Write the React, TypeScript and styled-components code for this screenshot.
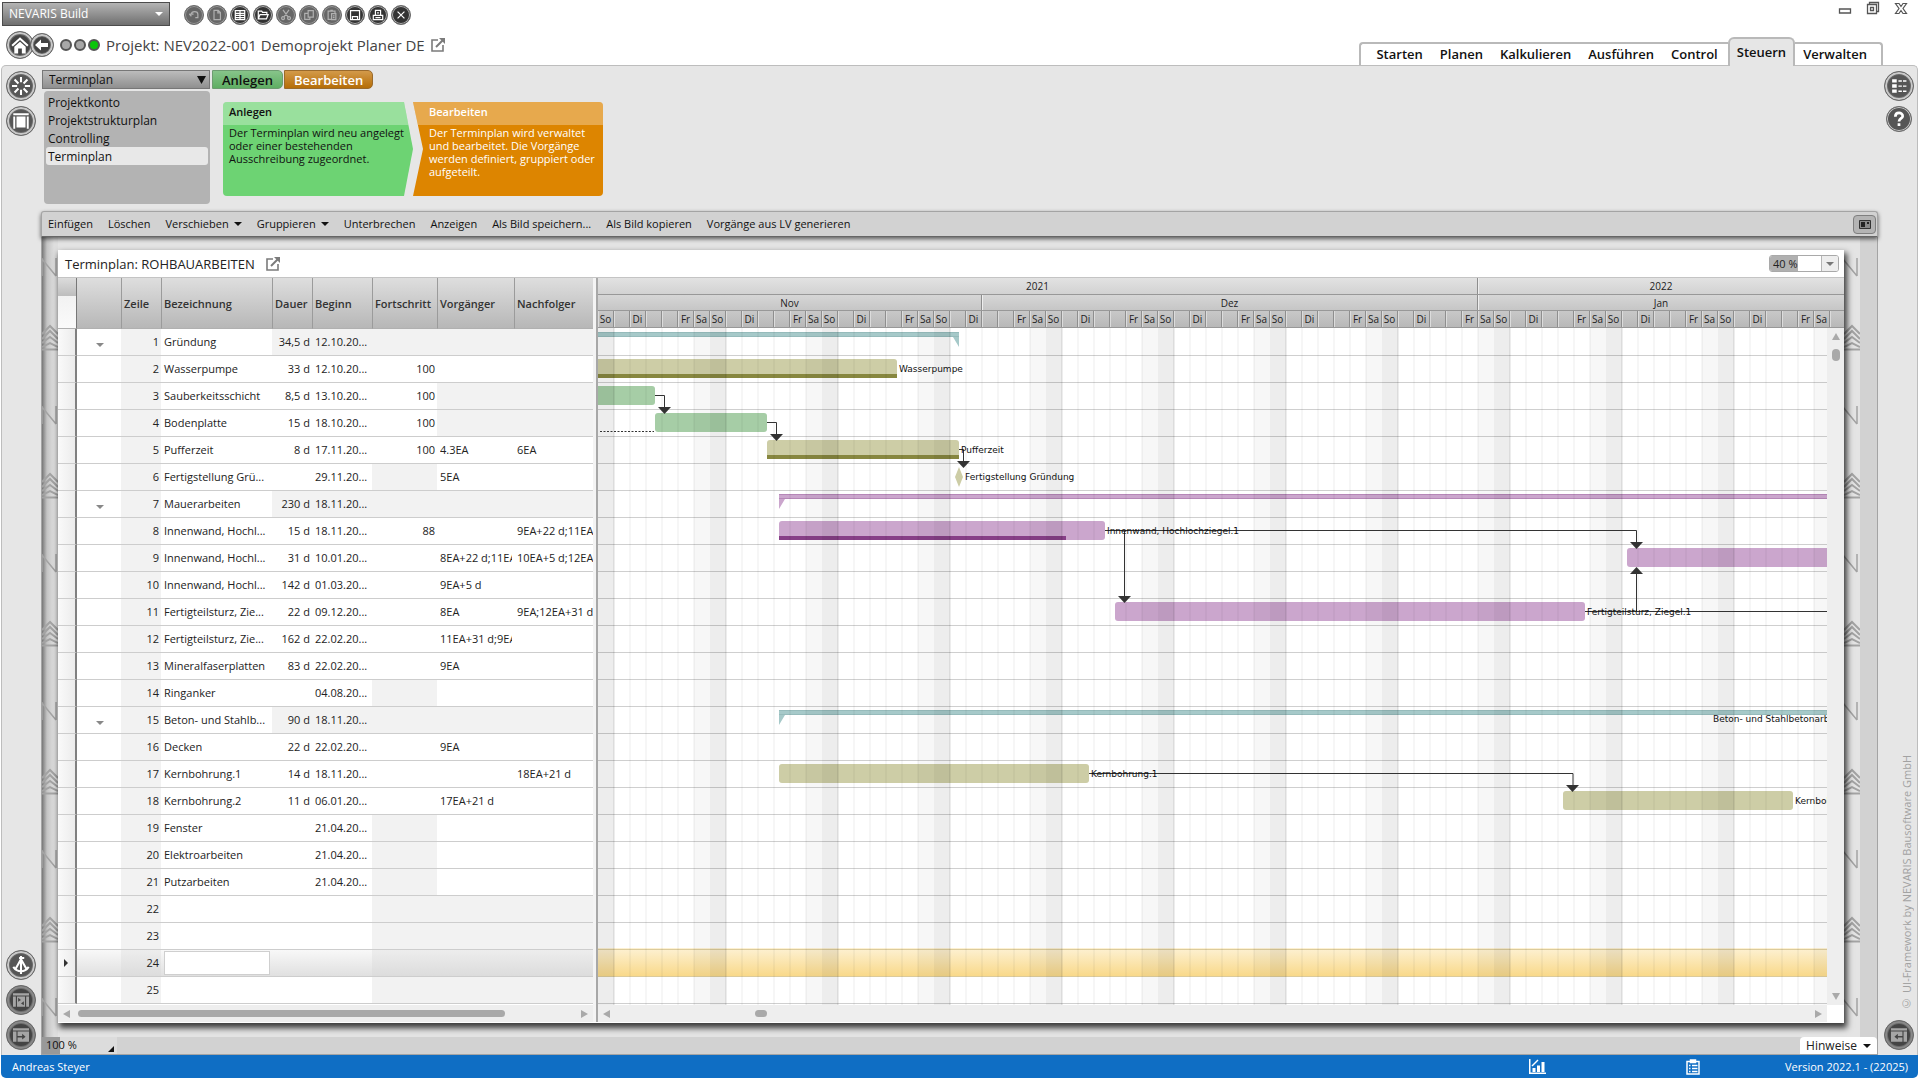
import React from "react";
import styled, { createGlobalStyle, css } from "styled-components";

const Global = createGlobalStyle`
  *, *::before, *::after { box-sizing: border-box; }
  body { margin: 0; background: #fff; color: #222; font: 12px/16px "Open Sans", "Noto Sans", sans-serif; }
  button, input, select { font: inherit; color: inherit; margin: 0; padding: 0; border: 0; background: none; border-radius: 0; outline: 0; }
  a { color: inherit; text-decoration: none; }
  svg { display: block; }
`;

/* ---------- shared parts ---------- */

const Round = styled.button<{ $size: number; $tone?: string; $ring?: string; $ink?: string; $tuck?: boolean }>`
  width: ${(p) => p.$size}px;
  height: ${(p) => p.$size}px;
  flex: none;
  display: grid;
  place-items: center;
  border-radius: 50%;
  color: ${(p) => p.$ink ?? "#fff"};
  background: ${(p) => p.$tone ?? "#565656"};
  border: 1px solid #6b6b6b;
  box-shadow: inset 0 0 0 2px ${(p) => p.$ring ?? "#c9c9c9"}, inset 0 0 0 3px #6b6b6b;
  ${(p) => p.$tuck && "margin-left: -4px;"}
`;

const SmallRound = styled(Round)`
  box-shadow: inset 0 0 0 1px ${(p) => p.$ring ?? "#c9c9c9"};
`;

const Select = styled.select`
  appearance: none;
  cursor: default;
`;

const Caret = styled.i<{ $w?: number; $color?: string }>`
  display: block;
  flex: none;
  border: solid transparent;
  border-width: ${(p) => p.$w ?? 4}px ${(p) => p.$w ?? 4}px 0;
  border-top-color: ${(p) => p.$color ?? "#111"};
`;

const Glyph = ({ d, size = 14, fill = false, w = 1.4 }: { d: string; size?: number; fill?: boolean; w?: number }) => (
  <svg width={size} height={size} viewBox="0 0 14 14" fill={fill ? "currentColor" : "none"} stroke={fill ? "none" : "currentColor"} strokeWidth={w} fillRule="evenodd">
    <path d={d} />
  </svg>
);

const OpenIcon = () => (
  <svg width="16" height="16" viewBox="0 0 16 16" fill="none" stroke="#7b7b7b" strokeWidth="1.6">
    <path d="M8 3H2v11h11V8" />
    <path d="M6 10l6.5-6.5" strokeWidth="2" />
    <path d="M9 1h6v6z" fill="#7b7b7b" stroke="none" />
  </svg>
);

/* ---------- page frame ---------- */

const Page = styled.div`
  min-height: 100vh;
  display: flex;
  flex-direction: column;
  padding: 0 2px 3px 1px;
`;

const Top = styled.header`
  display: flex;
  justify-content: space-between;
  height: 65px;
`;

const TopLeft = styled.div`
  display: flex;
  flex-direction: column;
  gap: 5px;
  padding: 1px 0 0 1px;
`;

const ToolRow = styled.div`
  display: flex;
  align-items: center;
  gap: 14px;
  height: 25px;
`;

const AppPick = styled.label`
  display: flex;
  align-items: center;
  width: 168px;
  height: 24px;
  padding: 0 6px;
  border: 1px solid #4c4c4c;
  background: linear-gradient(#b4b4b4, #6f6f6f);
  color: #fff;
  text-shadow: 1px 1px 1px #444;
  select { flex: 1; }
`;

const IconStrip = styled.div`
  display: flex;
  gap: 3px;
  padding-top: 3px;
`;

const TitleRow = styled.div`
  display: flex;
  align-items: center;
  height: 28px;
  padding-left: 4px;
`;

const Leds = styled.div`
  display: flex;
  gap: 2px;
  padding: 0 6px 0 6px;
`;

const Led = styled.span<{ $on?: boolean }>`
  width: 12px;
  height: 12px;
  border-radius: 50%;
  border: 2px solid #555;
  background: ${(p) => (p.$on ? "#0bc40b" : "#a8a8a8")};
`;

const Title = styled.h1`
  margin: 0 5px 0 0;
  font-size: 15px;
  line-height: 20px;
  font-weight: 400;
  color: #444;
`;

const TopRight = styled.div`
  display: flex;
  flex-direction: column;
  justify-content: space-between;
  align-items: flex-end;
`;

const WinButtons = styled.div`
  display: flex;
  gap: 14px;
  padding: 1px 10px 0 0;
  button { width: 14px; height: 14px; color: #555; }
`;

const Tabs = styled.nav`
  display: flex;
  align-items: flex-end;
  margin-right: 35px;
`;

const TabGroup = styled.div<{ $side: "left" | "right" }>`
  display: flex;
  gap: 17px;
  height: 23px;
  align-items: center;
  border: 2px solid #b9b9b9;
  border-bottom: 0;
  padding: 0 ${(p) => (p.$side === "left" ? "10px 2px 15px" : "14px 2px 8px")};
  ${(p) => (p.$side === "left" ? "border-right: 0; border-top-left-radius: 4px;" : "border-left: 0; border-top-right-radius: 4px;")}
`;

const Tab = styled.a<{ $active?: boolean }>`
  font-size: 13px;
  line-height: 18px;
  font-weight: 600;
  color: #111;
  ${(p) =>
    p.$active &&
    css`
      height: 29px;
      padding: 4px 7px 0;
      margin-bottom: -1px;
      background: #e6e6e6;
      border: 2px solid #b9b9b9;
      border-bottom: 0;
      border-radius: 6px 6px 0 0;
      z-index: 1;
    `}
`;

const Frame = styled.div`
  flex: 1;
  display: grid;
  grid-template-columns: 39px minmax(0, 1fr) 39px;
  background: #e6e6e6;
  border: 1px solid #bdbdbd;
  border-bottom: 0;
  border-radius: 5px 5px 0 0;
`;

const Rail = styled.aside<{ $side: "left" | "right" }>`
  display: flex;
  flex-direction: column;
  justify-content: space-between;
  align-items: center;
  padding: ${(p) => (p.$side === "left" ? "5px 2px 5px 0" : "5px 0 5px 2px")};
`;

const RailGroup = styled.div`
  display: flex;
  flex-direction: column;
  align-items: center;
  gap: 5px;
`;

const Credit = styled.span`
  writing-mode: vertical-rl;
  transform: rotate(180deg);
  color: #a2a2a2;
  font-size: 11px;
  line-height: 16px;
  margin: 0 0 4px 16px;
`;

const Center = styled.div`
  display: flex;
  flex-direction: column;
`;

/* ---------- module header ---------- */

const ModuleHead = styled.div`
  display: flex;
  height: 145px;
  padding-top: 4px;
`;

const ModuleCol = styled.div`
  width: 168px;
  margin: 0 2px 0 1px;
`;

const ModulePick = styled.label`
  display: flex;
  align-items: center;
  height: 19px;
  padding: 0 3px 0 6px;
  border: 1px solid #777;
  background: linear-gradient(#bcbcbc, #8f8f8f);
  color: #111;
  select { flex: 1; }
`;

const ModuleList = styled.ul`
  list-style: none;
  margin: 2px 0 0 2px;
  padding: 2px;
  height: 113px;
  border-radius: 4px;
  background: #b3b3b3;
`;

const ModuleItem = styled.button<{ $active?: boolean }>`
  display: block;
  width: 100%;
  height: 18px;
  padding: 0 2px;
  text-align: left;
  line-height: 17px;
  border-radius: 3px;
  color: #111;
  background: ${(p) => (p.$active ? "#e8e8e8" : "transparent")};
`;

const StepTabs = styled.div`
  display: flex;
  gap: 1px;
`;

const StepTab = styled.button<{ $kind: "go" | "edit" }>`
  height: 19px;
  padding: 0 9px;
  border: 1px solid ${(p) => (p.$kind === "go" ? "#6d9c70" : "#9a6a2c")};
  border-radius: 0 5px 5px 0;
  background: ${(p) => (p.$kind === "go" ? "linear-gradient(#87c48a, #5fae63)" : "linear-gradient(#d39a4a, #b56d07)")};
  color: ${(p) => (p.$kind === "go" ? "#111" : "#fff")};
  font-size: 13px;
  line-height: 16px;
  font-weight: 600;
`;

const Steps = styled.div`
  display: flex;
  padding: 13px 0 0 11px;
`;

const Step = styled.section<{ $kind: "go" | "edit" }>`
  width: 190px;
  height: 94px;
  overflow: hidden;
  font-size: 11px;
  line-height: 13px;
  font-weight: 500;
  color: ${(p) => (p.$kind === "go" ? "#111" : "#fff")};
  background: ${(p) => (p.$kind === "go" ? "#6dd373" : "#dd8500")};
  border-radius: ${(p) => (p.$kind === "go" ? "4px 0 0 4px" : "0 4px 4px 0")};
  clip-path: ${(p) =>
    p.$kind === "go"
      ? "polygon(0 0, 181px 0, 190px 50%, 181px 100%, 0 100%)"
      : "polygon(0 0, 100% 0, 100% 100%, 0 100%, 10px 50%)"};
  h2 {
    margin: 0;
    height: 23px;
    padding: 3px 6px 0 ${(p) => (p.$kind === "go" ? 6 : 16)}px;
    font-size: 11px;
    font-weight: 600;
    background: rgba(255, 255, 255, 0.3);
  }
  p { margin: 0; padding: 1px 0 0 ${(p) => (p.$kind === "go" ? 6 : 16)}px; white-space: nowrap; }
`;

/* ---------- workspace ---------- */

const Toolbar = styled.div`
  display: flex;
  align-items: center;
  gap: 15px;
  height: 26px;
  padding: 0 1px 0 6px;
  border: 1px solid #a4a4a4;
  border-bottom-color: #666;
  border-radius: 3px 3px 0 0;
  background: #d2d2d2;
  box-shadow: 0 2px 4px rgba(0, 0, 0, 0.6);
  z-index: 1;
  color: #111;
  font-size: 11px;
  > :last-child { margin-left: auto; }
`;

const ToolButton = styled.button`
  display: flex;
  align-items: center;
  gap: 5px;
  white-space: nowrap;
`;

const PanelToggle = styled.button`
  width: 23px;
  height: 19px;
  display: grid;
  place-items: center;
  border: 1px solid #7f7f7f;
  border-radius: 4px;
  background: #b4b4b4;
`;

const Workspace = styled.div`
  display: grid;
  grid-template-columns: 16px minmax(0, 1fr) 16px 17px;
  border: solid #a4a4a4;
  border-width: 0 1px;
  background: #e4e4e4;
`;

const Side = styled.div<{ $dark?: boolean }>`
  overflow: hidden;
  background: ${(p) => (p.$dark ? "linear-gradient(90deg, #777, #c4c4c4 5px, #dedede 12px)" : "#e4e4e4")};
`;

const Gutter = styled.div`
  background: #d2d2d2;
`;

const Panel = styled.main`
  margin: 13px 0 14px;
  background: #fff;
  box-shadow: 2px 4px 6px 1px rgba(0, 0, 0, 0.75);
  z-index: 1;
`;

const PanelHead = styled.div`
  display: flex;
  align-items: center;
  justify-content: space-between;
  height: 28px;
  padding: 0 5px 0 7px;
  border-bottom: 1px solid #c4c4c4;
  h2 { margin: 0; display: flex; gap: 10px; font-size: 13px; line-height: 16px; font-weight: 400; }
`;

const Percent = styled.div`
  display: flex;
  width: 70px;
  height: 17px;
  border: 1px solid #a9a9a9;
  border-radius: 3px;
  overflow: hidden;
  input {
    flex: 1;
    min-width: 0;
    padding-left: 3px;
    font-size: 11px;
    background: linear-gradient(90deg, #b0b0b0 28px, #fff 28px);
  }
  button {
    width: 17px;
    display: grid;
    place-items: center;
    border-left: 1px solid #b5b5b5;
    background: #ededed;
  }
`;

const Split = styled.div`
  display: grid;
  grid-template-columns: 535px 5px minmax(0, 1fr);
`;

const Splitter = styled.div`
  background: #f4f4f4;
  border-right: 2px solid #a8a8a8;
`;

/* ---------- task table ---------- */

const TableBox = styled.div`
  height: 727px;
  overflow: hidden;
`;

const Table = styled.table`
  width: 100%;
  table-layout: fixed;
  border-collapse: separate;
  border-spacing: 0;
  font-size: 11px;
  line-height: 16px;
`;

const HeadCell = styled.th`
  height: 51px;
  padding: 2px 0 0 2px;
  text-align: left;
  font-weight: 600;
  color: #333;
  white-space: nowrap;
  border-left: 1px solid #9b9b9b;
  border-bottom: 1px solid #b0b0b0;
  background: linear-gradient(#dedede, #b7b7b7);
  &:first-child { border-left: 0; background: linear-gradient(#dcdcdc, #bdbdbd 18px, #f2f2f2 18px, #fafafa); border-right: 1px solid #777; }
  &:nth-child(2) { border-left: 0; }
`;

const Cell = styled.td<{ $right?: boolean; $grey?: boolean; $current?: boolean }>`
  height: 27px;
  padding: 0 2px 0 3px;
  overflow: hidden;
  white-space: nowrap;
  text-align: ${(p) => (p.$right ? "right" : "left")};
  border-bottom: 1px solid #cdcdcd;
  background: ${(p) =>
    p.$current
      ? p.$grey ? "linear-gradient(#ededed, #dcdcdc)" : "linear-gradient(#f8f8f8, #e0e0e0)"
      : p.$grey ? "#f2f2f2" : "#fff"};
`;

const Clip = styled.div`
  overflow: hidden;
`;

const RowHead = styled.td`
  height: 27px;
  padding: 0 0 0 6px;
  border-right: 2px solid #808080;
  border-bottom: 1px solid #cdcdcd;
  background: linear-gradient(90deg, #fafafa, #ececec);
`;

const Expander = styled.button`
  display: grid;
  place-items: center;
  width: 100%;
  padding-top: 5px;
`;

const RowMark = styled.i`
  display: block;
  width: 0;
  border: solid transparent;
  border-width: 4px 0 4px 4px;
  border-left-color: #333;
`;

const NameInput = styled.input`
  display: block;
  width: 106px;
  height: 24px;
  background: #fff;
  border: 1px solid #cfcfcf;
`;

/* ---------- scroll bars ---------- */

const HBar = styled.div`
  display: flex;
  align-items: center;
  justify-content: space-between;
  height: 17px;
  padding: 0 5px;
  background: #eee;
`;

const VBar = styled.div`
  display: flex;
  flex-direction: column;
  align-items: center;
  justify-content: space-between;
  padding: 5px 0 5px;
  background: #eee;
`;

const Track = styled.div<{ $v?: boolean }>`
  flex: 1;
  display: flex;
  padding: ${(p) => (p.$v ? "8px 0" : "0 4px")};
`;

const Thumb = styled.div<{ $w: number; $h: number; $at?: number }>`
  width: ${(p) => p.$w}px;
  height: ${(p) => p.$h}px;
  margin-left: ${(p) => p.$at ?? 0}px;
  border-radius: 4px;
  background: #a9a9a9;
`;

const Arrow = ({ dir }: { dir: "l" | "r" | "u" | "d" }) => (
  <svg width="8" height="8" viewBox="0 0 8 8" fill="#a9a9a9">
    <path d={{ l: "M7 0v8L0 4z", r: "M1 0v8l7-4z", u: "M0 7h8L4 0z", d: "M0 1h8L4 8z" }[dir]} />
  </svg>
);

/* ---------- Gantt ---------- */

const ScaleRow = styled.div<{ $level: number }>`
  display: flex;
  height: ${(p) => (p.$level === 1 ? 16 : 17)}px;
  overflow: hidden;
  font-size: 10px;
  line-height: 16px;
  color: #222;
  border-bottom: 1px solid #989898;
  background: ${(p) => ["linear-gradient(#e2e2e2, #d2d2d2)", "linear-gradient(#d6d6d6, #c6c6c6)", "linear-gradient(#c8c8c8, #b8b8b8)"][p.$level]};
`;

const Span = styled.div<{ $days?: number }>`
  flex: ${(p) => (p.$days ? `0 0 ${p.$days * 16}px` : "1 1 0")};
  text-align: center;
  &:not(:last-child) { border-right: 1px solid #8e8e8e; }
  & + & { box-shadow: inset 1px 0 #eee; }
`;

const Day = styled.div`
  flex: 0 0 16px;
  text-align: center;
  line-height: 17px;
  border-right: 1px solid #8e8e8e;
  box-shadow: inset 1px 0 #dcdcdc;
`;

const GanttBody = styled.div`
  display: grid;
  grid-template-columns: minmax(0, 1fr) 17px;
  height: 677px;
  > svg { width: 100%; height: 100%; }
`;

const GanttFoot = styled.div`
  display: grid;
  grid-template-columns: minmax(0, 1fr) 17px;
`;

const DAY_NAMES = ["So", "", "Di", "", "", "Fr", "Sa"];
const DAYS = Array.from({ length: 78 }, (_, i) => (i === 77 ? "" : DAY_NAMES[i % 7]));

const COLORS = { olive: ["#cdcda6", "#87873f"], green: ["#a6cda6", "#4f8f4f"], violet: ["#cba6cd", "#873f87"], teal: ["#a6c9c9", "#6f9d9d"] } as const;
type Hue = keyof typeof COLORS;

type Bar = { row: number; from: number; to: number; hue: Hue; done?: number; label?: string };
const BARS: Bar[] = [
  { row: 2, from: -10, to: 299, hue: "olive", done: 299, label: "Wasserpumpe" },
  { row: 3, from: -10, to: 57, hue: "green" },
  { row: 4, from: 57, to: 169, hue: "green" },
  { row: 5, from: 169, to: 361, hue: "olive", done: 361, label: "Pufferzeit" },
  { row: 8, from: 181, to: 507, hue: "violet", done: 468, label: "Innenwand, Hochlochziegel.1" },
  { row: 9, from: 1029, to: 1900, hue: "violet" },
  { row: 11, from: 517, to: 987, hue: "violet", label: "Fertigteilsturz, Ziegel.1" },
  { row: 17, from: 181, to: 491, hue: "olive", label: "Kernbohrung.1" },
  { row: 18, from: 965, to: 1195, hue: "olive", label: "Kernbohrung.2" },
];

const rowY = (row: number) => (row - 1) * 27;

const TaskBar = ({ row, from, to, hue, done }: Bar) => {
  const y = rowY(row) + 4;
  return (
    <g>
      <rect x={from} y={y} width={to - from} height={19} rx={3} fill={COLORS[hue][0]} />
      {done !== undefined && <rect x={from} y={y + 15} width={done - from} height={4} fill={COLORS[hue][1]} />}
    </g>
  );
};

const Summary = ({ row, from, to, hue }: Bar) => {
  const y = rowY(row) + 4;
  return (
    <g fill={COLORS[hue][0]}>
      <rect x={from} y={y} width={to - from} height={5} />
      <path d={`M${from} ${y}v15l6 -10v-5z M${to} ${y}v15l-6 -10v-5z`} />
      <path d={`M${from} ${y + 0.5}H${to} M${from} ${y + 4.5}H${to}`} stroke={COLORS[hue][1]} strokeOpacity="0.3" />
    </g>
  );
};

const Down = ({ x, y }: { x: number; y: number }) => <path d={`M${x - 6} ${y}h13l-6.5 7z`} fill="#333" />;

const Chart = () => (
  <svg fontSize="9" fontFamily='"DejaVu Sans", sans-serif' fill="#111" role="img" aria-label="Balkenplan">
    <defs>
      <pattern id="week" width="112" height="27" patternUnits="userSpaceOnUse">
        <rect width="16" height="27" fill="#000" fillOpacity="0.07" />
        <rect x="96" width="16" height="27" fill="#000" fillOpacity="0.03" />
        <rect x="15" width="2" height="27" fill="#000" fillOpacity="0.07" />
        {[32, 48, 64, 80, 96].map((x) => (
          <rect key={x} x={x - 1} width="2" height="27" fill="#000" fillOpacity="0.035" />
        ))}
      </pattern>
      <pattern id="rows" width="100" height="27" patternUnits="userSpaceOnUse">
        <rect width="100" height="1" fill="#cfcfcf" />
      </pattern>
      <linearGradient id="today" x2="0" y2="1">
        <stop offset="0" stopColor="#fdf1d3" />
        <stop offset="1" stopColor="#f9d98a" />
      </linearGradient>
    </defs>
    <rect width="100%" height="100%" fill="#fff" />
    <rect y="1" width="100%" height="676" fill="url(#rows)" />
    <rect y="620" width="100%" height="28" fill="url(#today)" />
    <path d="M0 621.5h3000M0 648.5h3000" stroke="#dccb9b" />
    <Summary row={1} from={-20} to={361} hue="teal" />
    <Summary row={7} from={181} to={2500} hue="violet" />
    <Summary row={15} from={181} to={2500} hue="teal" />
    {BARS.map((b) => <TaskBar key={b.row} {...b} />)}
    <path d="M361 139l4 10-4 10-4-10z" fill="#cdcda6" />
    <rect width="100%" height="100%" fill="url(#week)" />
    <g fill="none" stroke="#333">
      <path d="M2 103.5h54" strokeDasharray="2 1.5" />
      <path d="M57 67.5h9.500v12 M169 94.500h9.500v12 M361 121.500h4.500v12" />
      <path d="M507 202.500h531.500v12 M526.500 202.500v66 M1038.500 283.500v-38 M987 283.500h2000 M491 445.500h484v12" />
    </g>
    <Down x={66} y={79} />
    <Down x={178} y={106} />
    <Down x={365} y={133} />
    <Down x={526} y={268} />
    <Down x={1038} y={214} />
    <Down x={974} y={457} />
    <path d="M1032 246h13l-6.500 -7z" fill="#333" />
    {BARS.filter((b) => b.label).map((b) => (
      <text key={b.row} x={b.to + 2} y={rowY(b.row) + 17}>{b.label}</text>
    ))}
    <text x="367" y={rowY(6) + 17}>Fertigstellung Gründung</text>
    <text x="1115" y={rowY(15) + 16}>Beton- und Stahlbetonarbeiten</text>
  </svg>
);

/* ---------- status ---------- */

const BottomBar = styled.div`
  display: flex;
  justify-content: space-between;
  height: 18px;
  background: #d2d2d2;
  border: 1px solid #a4a4a4;
  border-width: 0 1px 1px;
`;

const ZoomField = styled.label`
  display: flex;
  align-items: flex-end;
  width: 75px;
  padding: 0 3px 2px 0;
  background: linear-gradient(90deg, #999 18px, #dcdcdc 18px);
  input { flex: 1; min-width: 0; padding-left: 4px; height: 14px; font-size: 11px; color: #111; }
`;

const Hints = styled.button`
  display: flex;
  align-items: center;
  justify-content: center;
  gap: 6px;
  width: 77px;
  background: #fff;
  border-radius: 4px 4px 0 0;
`;

const Status = styled.footer`
  display: grid;
  grid-template-columns: minmax(0, 1fr) 140px 222px;
  align-items: center;
  height: 23px;
  padding: 0 10px 0 11px;
  background: #0f6ec4;
  color: #fff;
  font-size: 11px;
  border-radius: 0 0 5px 5px;
  > :last-child { display: flex; justify-content: space-between; align-items: center; }
`;

const StatusStart = styled.div`
  display: flex;
  justify-content: space-between;
  align-items: center;
`;

/* ---------- data ---------- */

type Task = { name?: string; dur?: string; start?: string; done?: string; prev?: string; next?: string; grey?: string; group?: boolean };

const TASKS: Task[] = [
  { name: "Gründung", dur: "34,5 d", start: "12.10.20...", grey: "dsfpn", group: true },
  { name: "Wasserpumpe", dur: "33 d", start: "12.10.20...", done: "100" },
  { name: "Sauberkeitsschicht", dur: "8,5 d", start: "13.10.20...", done: "100", grey: "pn" },
  { name: "Bodenplatte", dur: "15 d", start: "18.10.20...", done: "100", grey: "pn" },
  { name: "Pufferzeit", dur: "8 d", start: "17.11.20...", done: "100", prev: "4.3EA", next: "6EA" },
  { name: "Fertigstellung Grü...", start: "29.11.20...", prev: "5EA", grey: "f" },
  { name: "Mauerarbeiten", dur: "230 d", start: "18.11.20...", grey: "dsfpn", group: true },
  { name: "Innenwand, Hochl...", dur: "15 d", start: "18.11.20...", done: "88", next: "9EA+22 d;11EA" },
  { name: "Innenwand, Hochl...", dur: "31 d", start: "10.01.20...", prev: "8EA+22 d;11EA", next: "10EA+5 d;12EA" },
  { name: "Innenwand, Hochl...", dur: "142 d", start: "01.03.20...", prev: "9EA+5 d" },
  { name: "Fertigteilsturz, Zie...", dur: "22 d", start: "09.12.20...", prev: "8EA", next: "9EA;12EA+31 d" },
  { name: "Fertigteilsturz, Zie...", dur: "162 d", start: "22.02.20...", prev: "11EA+31 d;9EA" },
  { name: "Mineralfaserplatten", dur: "83 d", start: "22.02.20...", prev: "9EA" },
  { name: "Ringanker", start: "04.08.20...", grey: "f" },
  { name: "Beton- und Stahlb...", dur: "90 d", start: "18.11.20...", grey: "dsfpn", group: true },
  { name: "Decken", dur: "22 d", start: "22.02.20...", prev: "9EA" },
  { name: "Kernbohrung.1", dur: "14 d", start: "18.11.20...", next: "18EA+21 d" },
  { name: "Kernbohrung.2", dur: "11 d", start: "06.01.20...", prev: "17EA+21 d" },
  { name: "Fenster", start: "21.04.20...", grey: "f" },
  { name: "Elektroarbeiten", start: "21.04.20...", grey: "f" },
  { name: "Putzarbeiten", start: "21.04.20...", grey: "f" },
  { grey: "fpn" },
  { grey: "fpn" },
  { grey: "fpn" },
  { grey: "fpn" },
];

const CURRENT_ROW = 24;
const COLS = [19, 44, 40, 111, 40, 60, 65, 77, 79];
const HEADS = ["", "", "Zeile", "Bezeichnung", "Dauer", "Beginn", "Fortschritt", "Vorgänger", "Nachfolger"];

const TOOL_ICONS: [string, string, boolean][] = [
  ["Rückgängig", "M1.500 6h5M4 8.500L1.500 6M4 6c0-4 7.500-4 7.500 0v4h-3", false],
  ["Neu", "M3.500 1.500h5l2.500 2.500v8.500h-7.500z M8 1.500v3h3", false],
  ["Liste", "M1.500 2h11v10.500h-11z M2 5h10M2 7.500h10M2 10h10M7 2v10", true],
  ["Öffnen", "M1.500 11.500v-9h4l1 1.500h5v2 M1.500 11.500l2-5h9.500l-2 5z", true],
  ["Ausschneiden", "M3.500 1l6 8.500M10.500 1l-6 8.500M3.500 9a1.700 1.700 0 1 0 .1 0M10.500 9a1.700 1.700 0 1 0 .1 0", false],
  ["Kopieren", "M6 2h6v7.500H6z M6 5H2v7h6V9.500", false],
  ["Einfügen", "M6 12H2.500V2.500h8V5M6.500 5.500h5V12.500h-5zM5 1.500h3M8 8h2M8 10h2", false],
  ["Speichern", "M1.800 1.800h10.500v10.500H1.800z M4 12V9h6v3", true],
  ["Drucken", "M4 1.500h6v6H4z M1.500 7.500h11v5h-11z M4 10h6M6 4.500h2", true],
  ["Schließen", "M3 3l8 8M11 3l-8 8", true],
];

const TOOLS: [string, boolean][] = [
  ["Einfügen", false], ["Löschen", false], ["Verschieben", true], ["Gruppieren", true], ["Unterbrechen", false],
  ["Anzeigen", false], ["Als Bild speichern...", false], ["Als Bild kopieren", false], ["Vorgänge aus LV generieren", false],
];

const MODULES = ["Projektkonto", "Projektstrukturplan", "Controlling", "Terminplan"];

const SideArt = ({ id, dx = 0 }: { id: string; dx?: number }) => (
  <svg width="16" height="800" fill="none" stroke="#a3a3a3" strokeWidth="1.500">
    <defs>
      <pattern id={id} width="16" height="148" patternUnits="userSpaceOnUse" y="20">
        <path d={`M${dx} 1v18M${dx} 2l14 17M${dx + 14} 1v18`} />
        <path d="M0 77l8 -8 8 8M0 82l8 -8 8 8M0 86l8 -6 8 6M0 90l8 -4 8 4M0 92.500h16" strokeWidth="2" />
      </pattern>
    </defs>
    <rect width="16" height="800" fill={`url(#${id})`} stroke="none" />
  </svg>
);

const TaskTable = () => (
  <div>
    <TableBox>
      <Table>
        <colgroup>{COLS.map((w, i) => <col key={i} width={w} />)}</colgroup>
        <thead>
          <tr>{HEADS.map((h, i) => <HeadCell key={i} scope="col">{h}</HeadCell>)}</tr>
        </thead>
        <tbody>
          {TASKS.map((t, i) => {
            const current = i + 1 === CURRENT_ROW;
            const grey = (k: string) => !!t.grey?.includes(k);
            return (
              <tr key={i}>
                <RowHead>{current && <RowMark />}</RowHead>
                <Cell $current={current}>
                  {t.group && <Expander aria-label="Zuklappen"><Caret $color="#888" /></Expander>}
                </Cell>
                <Cell $right $grey $current={current}>{i + 1}</Cell>
                <Cell $current={current}>{current ? <NameInput aria-label="Bezeichnung" /> : t.name}</Cell>
                <Cell $right $grey={grey("d")} $current={current}>{t.dur}</Cell>
                <Cell $grey={grey("s")} $current={current}>{t.start}</Cell>
                <Cell $right $grey={grey("f")} $current={current}>{t.done}</Cell>
                <Cell $grey={grey("p")} $current={current}><Clip>{t.prev}</Clip></Cell>
                <Cell $grey={grey("n")} $current={current}>{t.next}</Cell>
              </tr>
            );
          })}
        </tbody>
      </Table>
    </TableBox>
    <HBar>
      <Arrow dir="l" />
      <Track><Thumb $w={427} $h={7} $at={3} /></Track>
      <Arrow dir="r" />
    </HBar>
  </div>
);

const Gantt = () => (
  <div>
    <ScaleRow $level={0}><Span $days={55}>2021</Span><Span>2022</Span></ScaleRow>
    <ScaleRow $level={1}><Span $days={24}>Nov</Span><Span $days={31}>Dez</Span><Span>Jan</Span></ScaleRow>
    <ScaleRow $level={2}>{DAYS.map((d, i) => <Day key={i}>{d}</Day>)}</ScaleRow>
    <GanttBody>
      <Chart />
      <VBar>
        <Arrow dir="u" />
        <Track $v><Thumb $w={8} $h={12} /></Track>
        <Arrow dir="d" />
      </VBar>
    </GanttBody>
    <GanttFoot>
      <HBar>
        <Arrow dir="l" />
        <Track><Thumb $w={12} $h={7} $at={140} /></Track>
        <Arrow dir="r" />
      </HBar>
    </GanttFoot>
  </div>
);

const DOCK_INK = { $tone: "#444", $ring: "#888", $ink: "#a5a5a5" };

export default function App() {
  return (
    <Page>
      <Global />
      <Top>
        <TopLeft>
          <ToolRow>
            <AppPick>
              <Select aria-label="Anwendung"><option>NEVARIS Build</option></Select>
              <Caret $color="#fff" />
            </AppPick>
            <IconStrip>
              {TOOL_ICONS.map(([name, d, on]) => (
                <SmallRound key={name} $size={20} $tone={on ? "#333" : "#666"} $ring={on ? "#b2b2b2" : "#999"} $ink={on ? "#fff" : "#b0b0b0"} aria-label={name}>
                  <Glyph d={d} size={12} w={1.4} />
                </SmallRound>
              ))}
            </IconStrip>
          </ToolRow>
          <TitleRow>
            <Round $size={28} $tone="#444" aria-label="Start">
              <Glyph size={20} fill d="M7 1.500l6 5.500-1 1-5-4.500L2 8 1 7z M3 8.200l4-3.500 4 3.500V13H8.300V9.500H5.700V13H3z" />
            </Round>
            <Round $size={24} $tone="#444" $tuck aria-label="Zurück">
              <Glyph size={14} fill d="M0 7l6-5.500v3.500h7v4H6v3.500z" />
            </Round>
            <Leds><Led /><Led /><Led $on /></Leds>
            <Title>Projekt: NEV2022-001 Demoprojekt Planer DE</Title>
            <OpenIcon />
          </TitleRow>
        </TopLeft>
        <TopRight>
          <WinButtons>
            <button aria-label="Minimieren"><Glyph d="M1.500 8h11v4h-11z" w={1.3} /></button>
            <button aria-label="Wiederherstellen"><Glyph d="M1.500 3.500h9v9h-9zM4.500 6.500h3v3h-3zM3.500 3.500v-2h9v9h-2" w={1.3} /></button>
            <button aria-label="Beenden"><Glyph d="M1.500 2.500h3.500l2 3 2-3h3.500L9 7.500l3.500 5H9l-2-3-2 3H1.500L5 7.500z" w={1.2} /></button>
          </WinButtons>
          <Tabs>
            <TabGroup $side="left">
              {["Starten", "Planen", "Kalkulieren", "Ausführen", "Control"].map((t) => <Tab key={t} href="#">{t}</Tab>)}
            </TabGroup>
            <Tab href="#" $active>Steuern</Tab>
            <TabGroup $side="right"><Tab href="#">Verwalten</Tab></TabGroup>
          </Tabs>
        </TopRight>
      </Top>

      <Frame>
        <Rail $side="left">
          <RailGroup>
            <Round $size={30} aria-label="Aktualisieren">
              <Glyph size={18} w={1.600} d="M7 0v4M7 10v4M0 7h4M10 7h4M2 2l3 3M9 9l3 3M12 2L9 5M5 9l-3 3" />
            </Round>
            <Round $size={30} aria-label="Ansicht">
              <Glyph size={18} fill d="M1 1h12v1.500H1zM1 3.500h1.500V13H1zM11.500 3.500H13V13h-1.500zM3.500 3.500h7V12h-7z" />
            </Round>
          </RailGroup>
          <RailGroup>
            <Round $size={30} aria-label="Vermessung">
              <Glyph size={18} w={1.600} d="M7 0v14M7 2.500L2.500 10.500M7 2.500l4.500 8M1 8.500c3 4.500 9 4.500 12 0M5.500 1.500h4" />
            </Round>
            <Round $size={30} {...DOCK_INK} aria-label="Andocken beidseitig">
              <Glyph size={16} fill d="M0 1h14v2H0zM0 4h2.500v9H0zM11.500 4H14v9h-2.500zM3.500 4h7v9h-7zM4.500 5v3.500L7 7zM9.500 8v3.500L7 10z" />
            </Round>
            <Round $size={30} {...DOCK_INK} aria-label="Andocken links">
              <Glyph size={16} fill d="M0 1h14v2H0zM0 4h3v9H0zM4 4h10v9H4zM4 7.800h4V6l3 2.500L8 11V9.200H4z" />
            </Round>
          </RailGroup>
        </Rail>

        <Center>
          <ModuleHead>
            <ModuleCol>
              <ModulePick>
                <Select aria-label="Modul"><option>Terminplan</option></Select>
                <svg width="9" height="8"><path d="M0 0h9L4.500 8z" fill="#111" /></svg>
              </ModulePick>
              <ModuleList>
                {MODULES.map((m, i) => <li key={m}><ModuleItem $active={i === 3}>{m}</ModuleItem></li>)}
              </ModuleList>
            </ModuleCol>
            <div>
              <StepTabs>
                <StepTab $kind="go">Anlegen</StepTab>
                <StepTab $kind="edit">Bearbeiten</StepTab>
              </StepTabs>
              <Steps>
                <Step $kind="go">
                  <h2>Anlegen</h2>
                  <p>Der Terminplan wird neu angelegt<br />oder einer bestehenden<br />Ausschreibung zugeordnet.</p>
                </Step>
                <Step $kind="edit">
                  <h2>Bearbeiten</h2>
                  <p>Der Terminplan wird verwaltet<br />und bearbeitet. Die Vorgänge<br />werden definiert, gruppiert oder<br />aufgeteilt.</p>
                </Step>
              </Steps>
            </div>
          </ModuleHead>

          <Toolbar>
            {TOOLS.map(([t, menu]) => <ToolButton key={t}>{t}{menu && <Caret />}</ToolButton>)}
            <PanelToggle aria-label="Vorschau">
              <svg width="12" height="9"><path d="M.5.5h11v8H.5z" fill="#888" stroke="#333" /><path d="M2 2h4v5H2zM8 2h2v2H8z" fill="#222" /></svg>
            </PanelToggle>
          </Toolbar>

          <Workspace>
            <Side $dark><SideArt id="artL" /></Side>
            <Panel>
              <PanelHead>
                <h2>Terminplan: ROHBAUARBEITEN <OpenIcon /></h2>
                <Percent>
                  <input aria-label="Maßstab" defaultValue="40 %" />
                  <button aria-label="Maßstab wählen"><Caret $color="#777" /></button>
                </Percent>
              </PanelHead>
              <Split>
                <TaskTable />
                <Splitter />
                <Gantt />
              </Split>
            </Panel>
            <Side><SideArt id="artR" dx={-1} /></Side>
            <Gutter />
          </Workspace>

          <BottomBar>
            <ZoomField>
              <input aria-label="Zoom" defaultValue="100 %" />
              <svg width="6" height="6"><path d="M6 0v6H0z" fill="#111" /></svg>
            </ZoomField>
            <Hints>Hinweise <Caret /></Hints>
          </BottomBar>
        </Center>

        <Rail $side="right">
          <RailGroup>
            <Round $size={30} aria-label="Struktur">
              <Glyph size={16} fill d="M1 1h4v3H1zM1 5.500h4v3H1zM1 10h4v3H1zM6.500 2h3v1.200h-3zM10.500 2h3v1.200h-3zM6.500 6.500h3v1.200h-3zM10.500 6.500h3v1.200h-3zM6.500 11h3v1.200h-3zM10.500 11h3v1.200h-3z" />
            </Round>
            <SmallRound $size={26} aria-label="Hilfe">
              <Glyph size={16} w={2.400} d="M3.800 5c0-4.500 6.500-4.200 6.400-.5C10.200 6.500 7 6.500 7 9.200M7 10.800v2.400" />
            </SmallRound>
          </RailGroup>
          <RailGroup>
            <Credit>© UI-Framework by NEVARIS Bausoftware GmbH</Credit>
            <Round $size={30} {...DOCK_INK} aria-label="Andocken rechts">
              <Glyph size={16} fill d="M0 1h14v2H0zM0 4h10v9H0zM11 4h3v9h-3zM10 7.800H6V6L3 8.500 6 11V9.200h4z" />
            </Round>
          </RailGroup>
        </Rail>
      </Frame>

      <Status>
        <StatusStart>
          <span>Andreas Steyer</span>
          <svg width="17" height="16" fill="#fff"><path d="M0 0h1.500v13.500H17V15H0z M3.500 9h3v4h-3zM8 6.500h3V13H8zM12.500 3h3v10h-3z" /><path d="M3 7l6-6" stroke="#fff" strokeWidth="1.500" /></svg>
        </StatusStart>
        <span />
        <div>
          <svg width="14" height="16" fill="none" stroke="#fff" strokeWidth="1.500"><path d="M1 2.500h12v12.500H1zM4.500 1h5v2.500h-5zM3 6.500h1.500M3 9.500h1.500M3 12.500h1.500M6 6.500h5.500M6 9.500h5.500M6 12.500h5.500" /></svg>
          <span>Version 2022.1 - (22025)</span>
        </div>
      </Status>
    </Page>
  );
}
